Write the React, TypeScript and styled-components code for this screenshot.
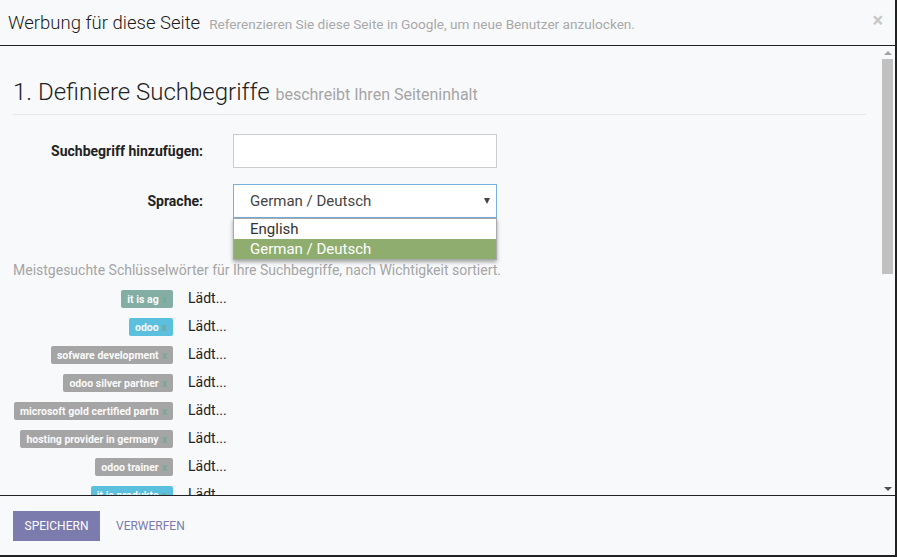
import React from 'react';
import styled, { createGlobalStyle } from 'styled-components';

const GlobalStyle = createGlobalStyle`
  html, body {
    margin: 0;
    padding: 0;
    background: #f8f9fb;
  }
  * {
    box-sizing: border-box;
  }
  body {
    font-family: Roboto, "Liberation Sans", sans-serif;
    color: #222;
  }
`;

interface Keyword {
  label: string;
  color: string;
}

const keywords: Keyword[] = [
  { label: 'it is ag', color: '#84aea3' },
  { label: 'odoo', color: '#5bc0de' },
  { label: 'sofware development', color: '#a5a5a5' },
  { label: 'odoo silver partner', color: '#a5a5a5' },
  { label: 'microsoft gold certified partn', color: '#a5a5a5' },
  { label: 'hosting provider in germany', color: '#a5a5a5' },
  { label: 'odoo trainer', color: '#a5a5a5' },
  { label: 'it is produkte', color: '#5bc0de' },
  { label: 'odoo hosting', color: '#a5a5a5' },
  { label: 'erp', color: '#a5a5a5' },
];

const App = () => {
  return (
    <>
      <GlobalStyle />
      <Modal>
        <Header>
          <Title>Werbung für diese Seite</Title>
          <Subtitle>Referenzieren Sie diese Seite in Google, um neue Benutzer anzulocken.</Subtitle>
          <Close>×</Close>
        </Header>

        <BodyFrame>
          <Body>
            <SectionTitle>
              1. Definiere Suchbegriffe <small>beschreibt Ihren Seiteninhalt</small>
            </SectionTitle>

            <Form>
              <Label>Suchbegriff hinzufügen:</Label>
              <Input />
              <Label>Sprache:</Label>
              <SelectWrap>
                <Select>
                  German / Deutsch
                  <Caret />
                </Select>
                <Options>
                  <Option>English</Option>
                  <Option selected>German / Deutsch</Option>
                </Options>
              </SelectWrap>
            </Form>

            <Hint>Meistgesuchte Schlüsselwörter für Ihre Suchbegriffe, nach Wichtigkeit sortiert.</Hint>

            <KeywordTable>
              {keywords.map((k) => (
                <KeywordRow key={k.label}>
                  <TagCell>
                    <Tag bg={k.color}>
                      {k.label}
                      <TagRemove>x</TagRemove>
                    </Tag>
                  </TagCell>
                  <Loading>Lädt...</Loading>
                </KeywordRow>
              ))}
            </KeywordTable>

            <SectionTitle>
              2. Seitentitel <small>der Titel wird in Google angezeigt</small>
            </SectionTitle>
            <Form>
              <Label>Titel</Label>
              <Input />
            </Form>
          </Body>

          <Scrollbar>
            <ScrollArrow up />
            <Track>
              <Thumb />
            </Track>
            <ScrollArrow />
          </Scrollbar>
        </BodyFrame>

        <Footer>
          <PrimaryButton>Speichern</PrimaryButton>
          <LinkButton>Verwerfen</LinkButton>
        </Footer>
      </Modal>
    </>
  );
};

const Modal = styled.div`
  width: 897px;
  height: 557px;
  display: flex;
  flex-direction: column;
  background: #f8f9fb;
  border-right: 2px solid #222;
  border-bottom: 2px solid #222;
`;

const Header = styled.div`
  height: 46px;
  flex-shrink: 0;
  display: flex;
  align-items: center;
  padding: 0 8px;
  border-bottom: 1px solid #222;
`;

const Title = styled.h4`
  margin: 0;
  font-size: 18.5px;
  font-weight: 300;
  color: #1a1a1a;
`;

const Subtitle = styled.span`
  margin-left: 9px;
  font-size: 13.6px;
  color: #a9a9a9;
  padding-top: 3px;
`;

const Close = styled.span`
  margin-left: auto;
  margin-right: 4px;
  font-size: 20px;
  font-weight: 700;
  color: #c8c8c8;
  line-height: 1;
  margin-top: -6px;
`;

const BodyFrame = styled.div`
  position: relative;
  flex: 1;
  min-height: 0;
  overflow: hidden;
`;

const Body = styled.div`
  padding: 33px 29px 20px 13px;
`;

const Scrollbar = styled.div`
  position: absolute;
  top: 0;
  right: 0;
  bottom: 0;
  width: 14px;
  display: flex;
  flex-direction: column;
  background: #f8f9fb;
`;

const ScrollArrow = styled.div<{ up?: boolean }>`
  height: 13px;
  flex-shrink: 0;
  display: flex;
  justify-content: center;
  align-items: center;

  &::before {
    content: '';
    width: 0;
    height: 0;
    border-left: 4px solid transparent;
    border-right: 4px solid transparent;
    ${({ up }) =>
      up ? 'border-bottom: 4px solid #a3a3a3;' : 'border-top: 4px solid #505050;'}
  }
`;

const Track = styled.div`
  flex: 1;
  padding: 0 2px 0 1px;
`;

const Thumb = styled.div`
  height: 215px;
  background: #c1c1c1;
`;

const SectionTitle = styled.h3`
  margin: 0 0 12px;
  padding-bottom: 6px;
  font-size: 24px;
  font-weight: 300;
  color: #222;
  line-height: 26px;
  border-bottom: 1px solid #e6e7ea;

  small {
    font-size: 16px;
    color: #a5a5a5;
    font-weight: 400;
  }
`;

const Form = styled.div`
  display: grid;
  grid-template-columns: 190px 264px;
  column-gap: 30px;
  row-gap: 16px;
  align-items: center;
  padding-top: 7px;
  margin-bottom: 20px;
`;

const Label = styled.label`
  text-align: right;
  font-size: 14px;
  font-weight: 700;
  color: #222;
`;

const Input = styled.div`
  height: 34px;
  border: 1px solid #ccc;
  background: #fff;
`;

const SelectWrap = styled.div`
  position: relative;
`;

const Select = styled.div`
  height: 34px;
  border: 1px solid #79b0dd;
  background: #fff;
  display: flex;
  align-items: center;
  padding-left: 16px;
  font-size: 15px;
  color: #444;
`;

const Caret = styled.span`
  margin-left: auto;
  margin-right: 6px;
  width: 0;
  height: 0;
  border-left: 3px solid transparent;
  border-right: 3px solid transparent;
  border-top: 6px solid #444;
`;

const Options = styled.div`
  position: absolute;
  top: 34px;
  left: 0;
  right: 0;
  background: #fff;
  border: 1px solid #a8a8a8;
  box-shadow: 0 2px 4px rgba(0, 0, 0, 0.35);
  z-index: 5;
`;

const Option = styled.div<{ selected?: boolean }>`
  height: 20px;
  line-height: 20px;
  padding-left: 16px;
  font-size: 15px;
  color: ${({ selected }) => (selected ? '#fff' : '#333')};
  background: ${({ selected }) => (selected ? '#8fad6f' : '#fff')};
`;

const Hint = styled.p`
  margin: 44px 0 6px;
  font-size: 14px;
  color: #a5a5a5;
`;

const KeywordTable = styled.div`
  display: flex;
  flex-direction: column;
  margin-bottom: 30px;
`;

const KeywordRow = styled.div`
  display: grid;
  grid-template-columns: 160px 1fr;
  column-gap: 15px;
  align-items: center;
  height: 28px;
`;

const TagCell = styled.div`
  text-align: right;
`;

const Tag = styled.span<{ bg: string }>`
  display: inline-flex;
  align-items: center;
  height: 18px;
  padding: 0 6px 0 6px;
  border-radius: 2px;
  background: ${({ bg }) => bg};
  color: #fafafa;
  font-size: 10.5px;
  font-weight: 700;
  white-space: nowrap;
`;

const TagRemove = styled.span`
  margin-left: 3px;
  color: #74a99b;
  font-weight: 700;
`;

const Loading = styled.span`
  font-size: 14px;
  color: #222;
`;

const Footer = styled.div`
  height: 60px;
  flex-shrink: 0;
  display: flex;
  align-items: center;
  gap: 16px;
  padding: 0 13px;
  border-top: 1px solid #222;
`;

const PrimaryButton = styled.button`
  display: inline-flex;
  align-items: center;
  justify-content: center;
  height: 30px;
  width: 87px;
  border: none;
  border-radius: 0;
  background: #7c7bad;
  color: #fff;
  font-family: Roboto, "Liberation Sans", sans-serif;
  font-size: 12px;
  text-transform: uppercase;
  padding: 0;
`;

const LinkButton = styled.button`
  display: inline-flex;
  align-items: center;
  height: 30px;
  border: none;
  background: transparent;
  color: #7c7bad;
  font-family: Roboto, "Liberation Sans", sans-serif;
  font-size: 12px;
  text-transform: uppercase;
  padding: 0;
`;

export default App;
